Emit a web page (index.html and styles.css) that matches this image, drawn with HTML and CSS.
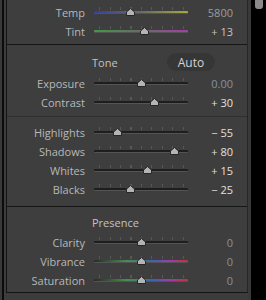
FILE: index.html
```html
<!DOCTYPE html>
<html lang="en">
  <head>
    <meta charset="utf-8" />
    <title>Basic</title>
    <link rel="stylesheet" href="styles.css">
  </head>
  <body>
    <div class="app">
      <div class="side">
        <div class="rail">
          <div class="panel">

            <section class="group wb">
              <div class="row">
                <span class="label">Temp</span>
                <div class="slider">
                  <div class="ticks"></div>
                  <div class="track track-temp"></div>
                  <div class="thumb-range"><svg class="thumb" style="left: 38%" viewBox="0 0 9 8"><path d="M0.5 7.5V4L4.5 0.5L8.5 4V7.5Z"/></svg></div>
                </div>
                <span class="value dim">5800</span>
              </div>
              <div class="row">
                <span class="label">Tint</span>
                <div class="slider">
                  <div class="ticks"></div>
                  <div class="track track-tint"></div>
                  <div class="thumb-range"><svg class="thumb" style="left: 54.3%" viewBox="0 0 9 8"><path d="M0.5 7.5V4L4.5 0.5L8.5 4V7.5Z"/></svg></div>
                </div>
                <span class="value mid">+ 13</span>
              </div>
            </section>

            <section class="group tone">
              <div class="head">
                <span class="title">Tone</span>
                <button class="auto">Auto</button>
              </div>
              <div class="row">
                <span class="label">Exposure</span>
                <div class="slider">
                  <div class="ticks"></div>
                  <div class="track"></div>
                  <div class="thumb-range"><svg class="thumb" style="left: 50%" viewBox="0 0 9 8"><path d="M0.5 7.5V4L4.5 0.5L8.5 4V7.5Z"/></svg></div>
                </div>
                <span class="value zero">0.00</span>
              </div>
              <div class="row">
                <span class="label">Contrast</span>
                <div class="slider">
                  <div class="ticks"></div>
                  <div class="track"></div>
                  <div class="thumb-range"><svg class="thumb" style="left: 66%" viewBox="0 0 9 8"><path d="M0.5 7.5V4L4.5 0.5L8.5 4V7.5Z"/></svg></div>
                </div>
                <span class="value">+ 30</span>
              </div>
            </section>

            <section class="group tone-sub">
              <div class="row">
                <span class="label">Highlights</span>
                <div class="slider">
                  <div class="ticks"></div>
                  <div class="track"></div>
                  <div class="thumb-range"><svg class="thumb" style="left: 22.5%" viewBox="0 0 9 8"><path d="M0.5 7.5V4L4.5 0.5L8.5 4V7.5Z"/></svg></div>
                </div>
                <span class="value">&minus; 55</span>
              </div>
              <div class="row">
                <span class="label">Shadows</span>
                <div class="slider">
                  <div class="ticks"></div>
                  <div class="track"></div>
                  <div class="thumb-range"><svg class="thumb" style="left: 90%" viewBox="0 0 9 8"><path d="M0.5 7.5V4L4.5 0.5L8.5 4V7.5Z"/></svg></div>
                </div>
                <span class="value">+ 80</span>
              </div>
              <div class="row">
                <span class="label">Whites</span>
                <div class="slider">
                  <div class="ticks"></div>
                  <div class="track"></div>
                  <div class="thumb-range"><svg class="thumb" style="left: 57.5%" viewBox="0 0 9 8"><path d="M0.5 7.5V4L4.5 0.5L8.5 4V7.5Z"/></svg></div>
                </div>
                <span class="value">+ 15</span>
              </div>
              <div class="row">
                <span class="label">Blacks</span>
                <div class="slider">
                  <div class="ticks"></div>
                  <div class="track"></div>
                  <div class="thumb-range"><svg class="thumb" style="left: 37.5%" viewBox="0 0 9 8"><path d="M0.5 7.5V4L4.5 0.5L8.5 4V7.5Z"/></svg></div>
                </div>
                <span class="value">&minus; 25</span>
              </div>
            </section>

            <section class="group presence">
              <div class="head">
                <span class="title">Presence</span>
              </div>
              <div class="row">
                <span class="label">Clarity</span>
                <div class="slider">
                  <div class="ticks"></div>
                  <div class="track"></div>
                  <div class="thumb-range"><svg class="thumb" style="left: 50%" viewBox="0 0 9 8"><path d="M0.5 7.5V4L4.5 0.5L8.5 4V7.5Z"/></svg></div>
                </div>
                <span class="value zero">0</span>
              </div>
              <div class="row">
                <span class="label">Vibrance</span>
                <div class="slider">
                  <div class="ticks"></div>
                  <div class="track track-sat"></div>
                  <div class="thumb-range"><svg class="thumb" style="left: 50%" viewBox="0 0 9 8"><path d="M0.5 7.5V4L4.5 0.5L8.5 4V7.5Z"/></svg></div>
                </div>
                <span class="value zero">0</span>
              </div>
              <div class="row">
                <span class="label">Saturation</span>
                <div class="slider">
                  <div class="ticks"></div>
                  <div class="track track-sat"></div>
                  <div class="thumb-range"><svg class="thumb" style="left: 50%" viewBox="0 0 9 8"><path d="M0.5 7.5V4L4.5 0.5L8.5 4V7.5Z"/></svg></div>
                </div>
                <span class="value zero">0</span>
              </div>
            </section>

          </div>
        </div>
      </div>
      <div class="scroll">
        <div class="scroll-thumb"></div>
      </div>
    </div>
  </body>
</html>
```

FILE: styles.css
```css
body {
  margin: 0;
  padding: 0;
  background-color: #000;
  font-family: "Open Sans", "DejaVu Sans", sans-serif;
  font-size: 11px;
  overflow: hidden;
}

.app {
  display: flex;
  width: 266px;
  height: 300px;
  overflow: hidden;
}

.side {
  width: 251px;
  height: 300px;
  box-sizing: border-box;
  background-color: #393939;
  padding: 0 3px 0 2px;
}

.rail {
  height: 300px;
  box-sizing: border-box;
  border-left: 2px solid #0c0c0c;
  padding-left: 2px;
  background-color: #3c3c3c;
}

.panel {
  height: 293px;
  box-sizing: border-box;
  background-color: #3e3e3e;
  border-left: 1px solid #141414;
  border-right: 1px solid #262626;
  border-bottom: 1px solid #141414;
}

.scroll {
  flex: 1;
  background-color: #000;
  padding: 0 3px 0 4px;
}

.scroll-thumb {
  height: 9px;
  border-radius: 0 0 3px 3px;
  background-color: #8a8a8a;
}

.group {
  border-bottom: 1px solid #161616;
}

.wb {
  padding: 3px 0 3px;
}

.tone {
  padding: 8px 0 4px;
  border-bottom-color: #2e2e2e;
}

.tone-sub {
  padding: 6px 0 7px;
}

.presence {
  padding: 6px 0 0;
  border-bottom: none;
}

.head {
  display: flex;
  align-items: center;
  height: 18px;
  padding: 0 32px 0 85px;
  margin-bottom: 3px;
}

.presence .head {
  margin-bottom: 2px;
}

.title {
  color: #c2c2c2;
  font-size: 11px;
}

.auto {
  margin-left: auto;
  width: 48px;
  height: 18px;
  border: none;
  border-radius: 9px;
  background-color: #363636;
  color: #d2d2d2;
  font-family: inherit;
  font-size: 12px;
  padding: 0;
}

.row {
  display: grid;
  grid-template-columns: 78px 94px 36px;
  column-gap: 9px;
  align-items: center;
  height: 19px;
}

.label {
  text-align: right;
  color: #b8b8b8;
  white-space: nowrap;
}

.value {
  text-align: right;
  color: #e0e0e0;
  white-space: nowrap;
}

.value.dim {
  color: #9c9c9c;
}

.value.mid {
  color: #c4c4c4;
}

.value.zero {
  color: #8590a0;
}

.slider {
  position: relative;
  height: 19px;
}

.ticks {
  position: absolute;
  left: 5px;
  top: 4px;
  width: 85px;
  height: 3px;
  background: repeating-linear-gradient(to right, #575757 0 1px, transparent 1px 10.5px);
}

.track {
  position: absolute;
  left: 0;
  right: 0;
  top: 8px;
  height: 2px;
  border-radius: 1px;
  background-color: #1e1e1e;
  border-bottom: 1px solid #545454;
}

.track-temp {
  background: linear-gradient(to right, #2f3f9a, #6a6a6a 50%, #a8a838);
}

.track-tint {
  background: linear-gradient(to right, #3f9a45, #6a6a6a 50%, #a53ea8);
}

.track-sat {
  background: linear-gradient(to right, #2a2a2a, #4a8e4e 35%, #3c62b0 62%, #9a3cb0 80%, #c4303c);
}

.thumb-range {
  position: absolute;
  left: 5px;
  right: 5px;
  top: 5px;
  height: 8px;
}

.thumb {
  position: absolute;
  top: 0;
  width: 9px;
  height: 8px;
  margin-left: -4.5px;
  fill: #b4b4b4;
  stroke: #262626;
  stroke-width: 1;
}
```
